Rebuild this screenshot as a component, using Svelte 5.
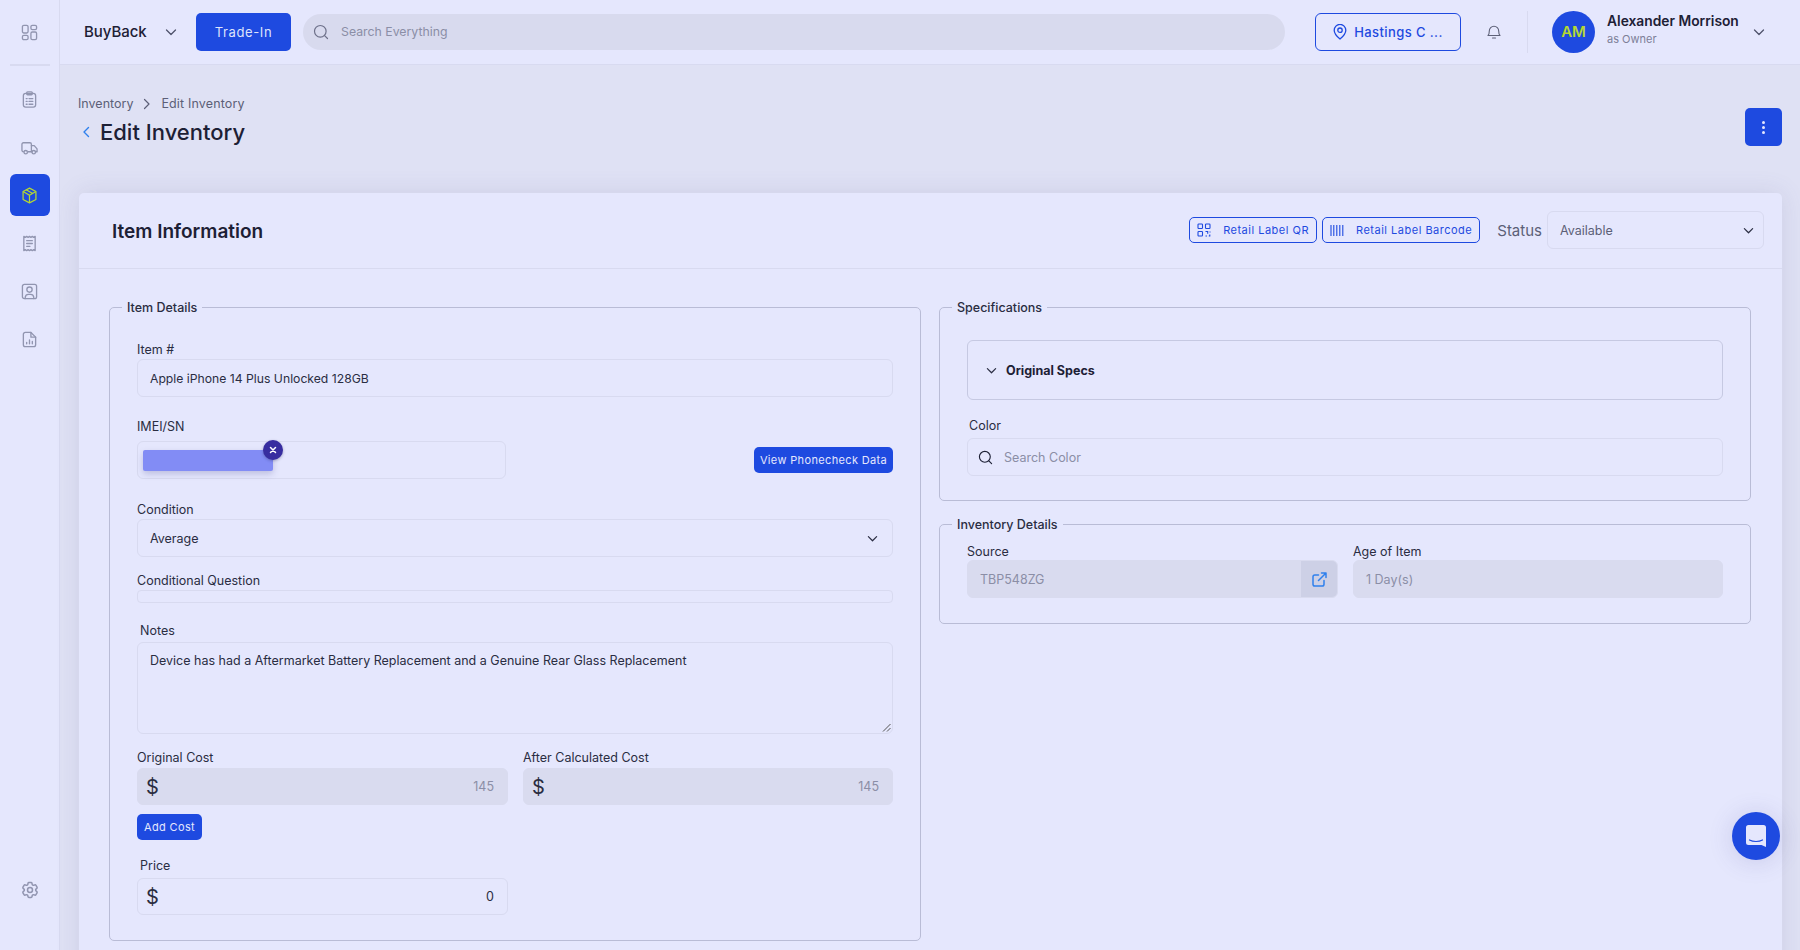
<script>
  const navTop = ['clipboard', 'truck'];
  const navBottom = ['receipt', 'contact', 'report'];
</script>

{#snippet icon(name)}
  <svg class="nav-icon" viewBox="0 0 18 18" fill="none" stroke="currentColor" stroke-width="1.4" stroke-linecap="round" stroke-linejoin="round">
    {#if name === 'clipboard'}
      <rect x="2.5" y="2.5" width="13" height="14.5" rx="2.5" />
      <rect x="6" y="1" width="6" height="3" rx="1" />
      <path d="M5.5 8h1M8.5 8h4M5.5 11h1M8.5 11h4M5.5 14h1M8.5 14h4" />
    {:else if name === 'truck'}
      <path d="M2.5 13.5A1.5 1.5 0 0 1 1 12V5.5A1.5 1.5 0 0 1 2.500 4H9.500A1.500 1.500 0 0 1 11 5.500V13.500H7.500" />
      <path d="M11 7h3l3 3.500v3h-1.500M11 13.500h.8" />
      <circle cx="5" cy="14" r="1.800" /><circle cx="13.500" cy="14" r="1.800" />
    {:else if name === 'receipt'}
      <path d="M3 1.500l1.500 1 1.500-1 1.500 1 1.500-1 1.500 1 1.500-1 1.500 1 1.500-1v15l-1.500-1-1.500 1-1.500-1-1.500 1-1.500-1-1.500 1-1.500-1-1.500 1z" />
      <path d="M6 6h6M6 9h6M6 12h3.500" />
    {:else if name === 'contact'}
      <rect x="1.500" y="1.500" width="15" height="15" rx="2" />
      <circle cx="9" cy="7" r="2.800" />
      <path d="M4.500 16.500v-1.500a3.500 3.500 0 0 1 3.500-3h2a3.500 3.500 0 0 1 3.500 3v1.500" />
    {:else if name === 'report'}
      <path d="M10.500 1.500H4.500A2 2 0 0 0 2.500 3.500v11a2 2 0 0 0 2 2h9a2 2 0 0 0 2-2V6.500z" />
      <path d="M10.500 1.500v5h5M6 13.500v-1.500M9 13.500V9.500M12 13.500v-2.500" />
    {/if}
  </svg>
{/snippet}

{#snippet chevron(cls)}
  <svg class={cls} viewBox="0 0 12 12" fill="none" stroke="currentColor" stroke-width="1.3" stroke-linecap="round" stroke-linejoin="round"><path d="M1.500 4l4.500 4.500L10.500 4" /></svg>
{/snippet}

{#snippet search(cls)}
  <svg class={cls} viewBox="0 0 16 16" fill="none" stroke="currentColor" stroke-width="1.200" stroke-linecap="round"><circle cx="7.300" cy="7.300" r="5.800" /><path d="M11.600 11.600l2.900 2.900" /></svg>
{/snippet}

<div class="app">
  <aside class="sidebar">
    <div class="logo-slot">
      <svg class="nav-icon" viewBox="0 0 18 18" fill="none" stroke="currentColor" stroke-width="1.400"><rect x="1.500" y="1.500" width="6" height="8" rx="1.500" /><rect x="10.500" y="1.500" width="6" height="4.500" rx="1.500" /><rect x="1.500" y="12" width="6" height="4.500" rx="1.500" /><rect x="10.500" y="8.500" width="6" height="8" rx="1.500" /></svg>
    </div>
    <nav class="nav">
      {#each navTop as n}
        <div class="nav-item">{@render icon(n)}</div>
      {/each}
      <div class="nav-item active">
        <svg class="nav-icon" viewBox="0 0 18 18" fill="none" stroke="currentColor" stroke-width="1.300" stroke-linejoin="round"><path d="M9 1.200l6.800 3.600v8.400L9 16.800l-6.800-3.600V4.800z" /><path d="M2.200 4.800L9 8.700l6.800-3.900M9 8.700v8.100M5.500 3l6.800 3.800" /></svg>
      </div>
      {#each navBottom as n}
        <div class="nav-item">{@render icon(n)}</div>
      {/each}
    </nav>
    <div class="settings">
      <svg class="gear" viewBox="0 0 24 24" fill="none" stroke="currentColor" stroke-width="1.800" stroke-linecap="round" stroke-linejoin="round"><circle cx="12" cy="12" r="3" /><path d="M9.594 3.940c.09-.542.56-.94 1.110-.94h2.593c.55 0 1.020.398 1.110.94l.213 1.281c.063.374.313.686.645.870.074.04.147.083.22.127.325.196.72.257 1.075.124l1.217-.456a1.125 1.125 0 0 1 1.370.49l1.296 2.247a1.125 1.125 0 0 1-.26 1.431l-1.003.827c-.293.241-.438.613-.43.992a7.723 7.723 0 0 1 0 .255c-.008.378.137.75.43.991l1.004.827c.424.35.534.955.26 1.430l-1.298 2.247a1.125 1.125 0 0 1-1.369.491l-1.217-.456c-.355-.133-.75-.072-1.076.124a6.470 6.470 0 0 1-.22.128c-.331.183-.581.495-.644.869l-.213 1.281c-.09.543-.56.94-1.110.94h-2.594c-.55 0-1.019-.398-1.110-.94l-.213-1.281c-.062-.374-.312-.686-.644-.87a6.520 6.520 0 0 1-.22-.127c-.325-.196-.72-.257-1.076-.124l-1.217.456a1.125 1.125 0 0 1-1.369-.49l-1.297-2.247a1.125 1.125 0 0 1 .26-1.431l1.004-.827c.292-.24.437-.613.43-.991a6.932 6.932 0 0 1 0-.255c.007-.38-.138-.751-.43-.992l-1.004-.827a1.125 1.125 0 0 1-.26-1.430l1.297-2.247a1.125 1.125 0 0 1 1.370-.491l1.216.456c.356.133.751.072 1.076-.124.072-.044.146-.086.22-.128.332-.183.582-.495.644-.869l.214-1.280z" /></svg>
    </div>
  </aside>

  <div class="content">
    <header class="topbar">
      <div class="brand"><span>BuyBack</span>{@render chevron('chev-top')}</div>
      <button class="btn-trade">Trade-In</button>
      <div class="global-search">{@render search('search-icon')}<span>Search Everything</span></div>
      <button class="btn-location">
        <svg viewBox="0 0 14 16" width="14" height="16" fill="none" stroke="currentColor" stroke-width="1.300"><path d="M7 15s5.800-4.700 5.800-8.800A5.800 5.800 0 0 0 1.200 6.200C1.200 10.300 7 15 7 15z" /><circle cx="7" cy="6.200" r="2.200" /></svg>
        <span>Hastings C ...</span>
      </button>
      <svg class="bell" viewBox="0 0 16 17" fill="none" stroke="currentColor" stroke-width="1.100" stroke-linejoin="round"><path d="M2 12.500c1-1 1.300-2 1.300-4.500a4.700 4.700 0 0 1 9.400 0c0 2.500.3 3.500 1.300 4.500z" /><path d="M6.500 15h3" stroke-linecap="round" /></svg>
      <div class="divider"></div>
      <div class="avatar">AM</div>
      <div class="user">
        <div class="user-name">Alexander Morrison</div>
        <div class="user-role">as Owner</div>
      </div>
      {@render chevron('chev-user')}
    </header>

    <main class="main">
      <div class="page-head">
        <div>
          <div class="crumbs">
            <span>Inventory</span>
            <svg viewBox="0 0 8 12" width="8" height="12" fill="none" stroke="currentColor" stroke-width="1.200" stroke-linecap="round" stroke-linejoin="round"><path d="M1.500 1.500L6 6l-4.500 4.500" /></svg>
            <span class="crumb-last">Edit Inventory</span>
          </div>
          <div class="title-row">
            <svg viewBox="0 0 8 12" width="8" height="12" fill="none" stroke="#2f80ed" stroke-width="1.400" stroke-linecap="round" stroke-linejoin="round"><path d="M6.500 1.500L2 6l4.500 4.500" /></svg>
            <h1>Edit Inventory</h1>
          </div>
        </div>
        <button class="kebab" aria-label="More"><i></i><i></i><i></i></button>
      </div>

      <section class="card">
        <div class="card-head">
          <h2>Item Information</h2>
          <div class="card-actions">
            <button class="btn-label">
              <svg viewBox="0 0 14 14" width="14" height="14" fill="none" stroke="currentColor" stroke-width="1.100"><rect x="1" y="1" width="4.500" height="4.500" rx=".8" /><rect x="8.500" y="1" width="4.500" height="4.500" rx=".8" /><rect x="1" y="8.500" width="4.500" height="4.500" rx=".8" /><path d="M3.250 3.200v.1M10.750 3.200v.1M3.250 10.700v.1M8.500 8.500h2.200v2.200M13 8.500v1M8.500 13h1.500M12.800 11.500V13H11.800" /></svg>
              <span>Retail Label QR</span>
            </button>
            <button class="btn-label">
              <svg viewBox="0 0 14 11" width="14" height="11" fill="none" stroke="currentColor" stroke-width="1.100"><path d="M1 0v11M3.800 0v11M6.800 0v11M9.800 0v11M12.800 0v11" /></svg>
              <span>Retail Label Barcode</span>
            </button>
            <span class="status-label">Status</span>
            <div class="field status-select"><span class="muted-dark">Available</span>{@render chevron('chev-select')}</div>
          </div>
        </div>

        <div class="card-body">
          <div class="col">
            <fieldset class="details">
              <legend>Item Details</legend>
              <label class="lbl item-lbl" for="item">Item #</label>
              <div class="field item-field" id="item">Apple iPhone 14 Plus Unlocked 128GB</div>

              <div class="lbl imei-lbl">IMEI/SN</div>
              <div class="imei-row">
                <div class="field imei-field">
                  <div class="chip"><span class="chip-x">
                    <svg viewBox="0 0 8 8" width="8" height="8" fill="none" stroke="#fff" stroke-width="1.500" stroke-linecap="round"><path d="M1.500 1.500l5 5M6.500 1.500l-5 5" /></svg>
                  </span></div>
                </div>
                <button class="btn-small phone">View Phonecheck Data</button>
              </div>

              <div class="lbl cond-lbl">Condition</div>
              <div class="field spread">Average {@render chevron('chev-select')}</div>

              <div class="lbl q-lbl">Conditional Question</div>
              <div class="q-box"></div>

              <div class="lbl notes-lbl">Notes</div>
              <div class="notes">
                Device has had a Aftermarket Battery Replacement and a Genuine Rear Glass Replacement
                <svg class="grip" viewBox="0 0 9 9" width="9" height="9" stroke="#555" fill="none"><path d="M8.500 1L1 8.500M8.500 5L5 8.500" /></svg>
              </div>

              <div class="cost-grid">
                <div>
                  <div class="lbl cost-lbl">Original Cost</div>
                  <div class="field money disabled"><b>$</b><span>145</span></div>
                </div>
                <div>
                  <div class="lbl cost-lbl">After Calculated Cost</div>
                  <div class="field money disabled"><b>$</b><span>145</span></div>
                </div>
              </div>
              <button class="btn-small add">Add Cost</button>
              <div class="lbl price-lbl">Price</div>
              <div class="field money price"><b>$</b><span>0</span></div>
            </fieldset>
          </div>

          <div class="col">
            <fieldset class="specs">
              <legend>Specifications</legend>
              <div class="accordion">
                {@render chevron('chev-acc')}
                <strong>Original Specs</strong>
              </div>
              <div class="lbl color-lbl">Color</div>
              <div class="field color-search">{@render search('search-color')}<span class="placeholder">Search Color</span></div>
            </fieldset>

            <fieldset class="inv">
              <legend>Inventory Details</legend>
              <div class="inv-grid">
                <div>
                  <div class="lbl inv-lbl">Source</div>
                  <div class="field disabled source">
                    <span>TBP548ZG</span>
                    <span class="addon">
                      <svg viewBox="0 0 15 15" width="15" height="15" fill="none" stroke="#2f80ed" stroke-width="1.500" stroke-linecap="round" stroke-linejoin="round"><path d="M12 8.500v3.700a1.800 1.800 0 0 1-1.800 1.800H2.800A1.800 1.800 0 0 1 1 12.200V4.800A1.800 1.800 0 0 1 2.800 3H6.500M9.500 1H14v4.500M14 1L6.500 8.500" /></svg>
                    </span>
                  </div>
                </div>
                <div>
                  <div class="lbl inv-lbl">Age of Item</div>
                  <div class="field disabled">1 Day(s)</div>
                </div>
              </div>
            </fieldset>
          </div>
        </div>
      </section>
    </main>
  </div>

  <div class="chat">
    <svg viewBox="0 0 22 24" width="22" height="24"><path d="M3.500 1h15A2.500 2.500 0 0 1 21 3.500V23l-4.500-2h-13A2.500 2.500 0 0 1 1 18.500v-15A2.500 2.500 0 0 1 3.500 1z" fill="#e5e7fd" /><path d="M4.500 16c3.500 2 9.500 2 13 0" stroke="#1e4ae0" stroke-width="1.200" fill="none" stroke-linecap="round" /></svg>
  </div>
</div>

<style>
  :global(body) {
    margin: 0;
    overflow: hidden;
    background: #dfe1f4;
  }
  * { box-sizing: border-box; }
  .app {
    display: flex;
    height: 950px;
    overflow: hidden;
    font-family: Inter, "Noto Sans", sans-serif;
    color: #1d2035;
    font-size: 12.5px;
    background: #dfe1f4;
    position: relative;
  }
  button { font-family: inherit; cursor: pointer; }

  .sidebar {
    width: 60px;
    flex: none;
    background: #e5e7fd;
    border-right: 1px solid #d8daf0;
    display: flex;
    flex-direction: column;
    align-items: center;
  }
  .logo-slot {
    height: 66px;
    width: 40px;
    border-bottom: 2px solid #d8daf0;
    display: flex;
    align-items: center;
    justify-content: center;
    flex: none;
  }
  .nav {
    display: flex;
    flex-direction: column;
    gap: 6px;
    padding-top: 12px;
  }
  .nav-item {
    width: 40px;
    height: 42px;
    border-radius: 6px;
    display: flex;
    align-items: center;
    justify-content: center;
  }
  .nav-icon { width: 17px; height: 17px; color: #9195b0; display: block; }
  .gear { width: 20px; height: 20px; color: #9195b0; display: block; }
  .active { background: #1e4ae0; }
  .active .nav-icon { color: #b5d832; width: 17px; height: 17px; }
  .settings { margin-top: auto; padding-bottom: 50px; }

  .content { flex: 1; min-width: 0; display: flex; flex-direction: column; }

  .topbar {
    height: 65px;
    flex: none;
    background: #e5e7fd;
    border-bottom: 1px solid #d8daf0;
    display: flex;
    align-items: center;
    padding: 0 35px 1px 24px;
  }
  .brand {
    display: flex;
    align-items: center;
    font-size: 15px;
    font-weight: 500;
    width: 112px;
    color: #1d2035;
    letter-spacing: -.05px;
  }
  .chev-top { width: 12px; height: 12px; color: #50546c; margin-left: 18px; }
  .btn-trade {
    width: 95px;
    height: 38px;
    border: 0;
    border-radius: 5px;
    background: #1e4ae0;
    color: #dfe3fb;
    font-size: 13px;
    letter-spacing: .6px;
  }
  .global-search {
    flex: 1;
    height: 36px;
    margin: 0 30px 0 12px;
    border-radius: 18px;
    background: #d8daee;
    display: flex;
    align-items: center;
    gap: 12px;
    padding-left: 10px;
    color: #8b8ea6;
    font-size: 12.3px;
  }
  .search-icon { width: 16px; height: 16px; color: #6d7089; }
  .btn-location {
    width: 146px;
    height: 38px;
    background: transparent;
    border: 1px solid #1e4ae0;
    border-radius: 6px;
    color: #1e4ae0;
    display: flex;
    align-items: center;
    justify-content: center;
    gap: 7px;
    font-size: 13px;
    letter-spacing: .4px;
    font-weight: 500;
  }
  .bell { width: 16px; height: 17px; color: #5e6178; margin-left: 25px; flex: none; }
  .divider { width: 1px; height: 42px; background: #d8daf0; margin-left: 25px; }
  .avatar {
    width: 43px;
    height: 42px;
    border-radius: 50%;
    background: #1e4ae0;
    color: #b5d832;
    font-weight: 600;
    font-size: 15px;
    display: flex;
    align-items: center;
    justify-content: center;
    margin-left: 24px;
    flex: none;
  }
  .user { margin-left: 12px; width: 145px; margin-bottom: 5px; }
  .user-name { font-size: 13.8px; font-weight: 600; line-height: 18px; color: #1d2035; white-space: nowrap; }
  .user-role { font-size: 11px; color: #7d8098; line-height: 14px; margin-top: 2px; }
  .chev-user { width: 12px; height: 12px; color: #50546c; flex: none; margin-left: 1px; }

  .main { flex: 1; min-height: 0; padding: 31px 18px 0 19px; }
  .page-head {
    display: flex;
    justify-content: space-between;
    align-items: flex-start;
    height: 97px;
  }
  .crumbs {
    display: flex;
    align-items: center;
    gap: 10px;
    line-height: 16px;
    color: #5c5f77;
    margin-left: -1px;
  }
  .crumb-last { letter-spacing: .15px; }
  .title-row { display: flex; align-items: center; gap: 10px; margin-top: 6px; padding-left: 3px; }
  h1 { font-size: 22px; font-weight: 500; margin: 0; line-height: 28px; color: #1d2035; }
  .kebab {
    width: 37px;
    height: 38px;
    margin-top: 12px;
    border: 0;
    border-radius: 5px;
    background: #1e4ae0;
    display: flex;
    flex-direction: column;
    align-items: center;
    justify-content: center;
    gap: 2px;
    padding: 0;
  }
  .kebab i { width: 3px; height: 3px; border-radius: 50%; background: #e5e7fd; }

  .card {
    background: #e5e7fd;
    border-radius: 5px;
    box-shadow: 0 0 24px rgba(90, 94, 150, .14);
    height: 800px;
  }
  .card-head {
    height: 76px;
    border-bottom: 1px solid #d8daf0;
    display: flex;
    align-items: center;
    justify-content: space-between;
    padding: 0 18px 0 33px;
  }
  h2 { font-size: 19px; font-weight: 600; margin: 2px 0 0; color: #1d2035; }
  .card-actions { display: flex; align-items: center; margin-top: -1px; }
  .btn-label {
    height: 26px;
    padding: 0 7px;
    background: transparent;
    border: 1px solid #1e4ae0;
    border-radius: 5px;
    color: #1e4ae0;
    font-size: 11px;
    letter-spacing: .5px;
    display: flex;
    align-items: center;
    gap: 12px;
    margin-right: 5px;
  }
  .status-label { font-size: 15px; color: #5c5f77; margin: 0 5px 0 12px; }
  .field {
    height: 38px;
    border: 1px solid #d8daf0;
    border-radius: 6px;
    display: flex;
    align-items: center;
    padding: 0 12px;
    color: #2a2d42;
    background: transparent;
  }
  .item-field { font-size: 12.2px; }
  .status-select { width: 217px; justify-content: space-between; padding-right: 9px; }
  .muted-dark { color: #5c5f77; }
  .chev-select { width: 11px; height: 11px; color: #2a2d42; }
  .spread { justify-content: space-between; padding-right: 14px; }

  .card-body {
    display: grid;
    grid-template-columns: 812px 812px;
    gap: 18px;
    padding: 30px 0 0 30px;
  }
  fieldset {
    margin: 0;
    border: 1px solid #b9bcd6;
    border-radius: 5px;
    padding: 0 27px;
    min-width: 0;
  }
  legend { padding: 0 5px; font-size: 12.5px; font-weight: 500; line-height: 17px; margin-left: -15px; color: #2a2d42; }
  .lbl { font-size: 12.5px; line-height: 16px; color: #2a2d42; display: block; }
  .details { height: 642px; }
  .item-lbl { margin-top: 26px; margin-bottom: 1px; }
  .imei-lbl { margin-top: 22px; margin-bottom: 6px; }
  .imei-row { display: flex; justify-content: space-between; align-items: center; }
  .imei-field { width: 369px; padding: 0 5px; }
  .chip {
    width: 130px;
    height: 21px;
    background: #828cf5;
    border-radius: 2px;
    position: relative;
    box-shadow: 0 3px 6px rgba(70, 70, 140, .25);
  }
  .chip-x {
    position: absolute;
    right: -10px;
    top: -10px;
    width: 20px;
    height: 20px;
    border-radius: 50%;
    background: #372da0;
    display: flex;
    align-items: center;
    justify-content: center;
    box-shadow: 0 1px 3px rgba(40, 40, 90, .35);
  }
  .btn-small {
    border: 0;
    border-radius: 5px;
    background: #1e4ae0;
    color: #e5e7fd;
    font-size: 11px;
    letter-spacing: .35px;
    height: 26px;
    padding: 0;
    display: block;
  }
  .phone { width: 139px; }
  .cond-lbl { margin-top: 23px; margin-bottom: 1px; }
  .q-lbl { margin-top: 16px; margin-bottom: 1px; }
  .q-box { height: 13px; border: 1px solid #d8daf0; border-radius: 4px; }
  .notes-lbl { margin-top: 20px; margin-bottom: 3px; padding-left: 3px; }
  .notes {
    height: 92px;
    border: 1px solid #d8daf0;
    border-radius: 6px;
    padding: 10px 12px;
    line-height: 16px;
    color: #2a2d42;
    position: relative;
  }
  .grip { position: absolute; right: 1px; bottom: 1px; }
  .cost-grid { display: grid; grid-template-columns: 371px 370px; gap: 15px; margin-top: 16px; }
  .cost-lbl { margin-bottom: 2px; }
  .money { justify-content: space-between; padding: 0 13px 0 8px; height: 37px; }
  .money b { font-weight: 400; font-size: 20px; color: #2a2d42; }
  .disabled { background: #d9dbef; border-color: #d9dbef; color: #8b8ea6; }
  .add { width: 65px; margin-top: 9px; }
  .price-lbl { margin-top: 18px; margin-bottom: 4px; padding-left: 3px; }
  .price { width: 371px; }

  .specs { height: 202px; padding-top: 24px; }
  .accordion {
    height: 60px;
    border: 1px solid #c6c9e2;
    border-radius: 6px;
    display: flex;
    align-items: center;
    gap: 9px;
    padding-left: 18px;
  }
  .accordion strong { font-size: 12.5px; font-weight: 700; color: #1d2035; }
  .chev-acc { width: 11px; height: 11px; color: #2a2d42; }
  .color-lbl { margin-top: 18px; margin-bottom: 4px; padding-left: 2px; }
  .color-search { gap: 11px; padding-left: 10px; }
  .search-color { width: 15px; height: 15px; color: #1d2035; flex: none; }
  .placeholder { color: #8b8ea6; }
  .inv { margin-top: 15px; height: 108px; }
  .inv-grid { display: grid; grid-template-columns: 371px 370px; gap: 15px; }
  .inv-lbl { margin-top: 11px; margin-bottom: 0; }
  .source { padding-right: 0; justify-content: space-between; position: relative; overflow: hidden; }
  .addon {
    width: 36px;
    height: 36px;
    background: #cdd0e6;
    display: flex;
    align-items: center;
    justify-content: center;
  }

  .chat {
    position: absolute;
    left: 1732px;
    top: 812px;
    width: 48px;
    height: 48px;
    border-radius: 50%;
    background: #1e4ae0;
    display: flex;
    align-items: center;
    justify-content: center;
    box-shadow: 0 2px 24px rgba(70, 70, 150, .18);
  }
</style>
